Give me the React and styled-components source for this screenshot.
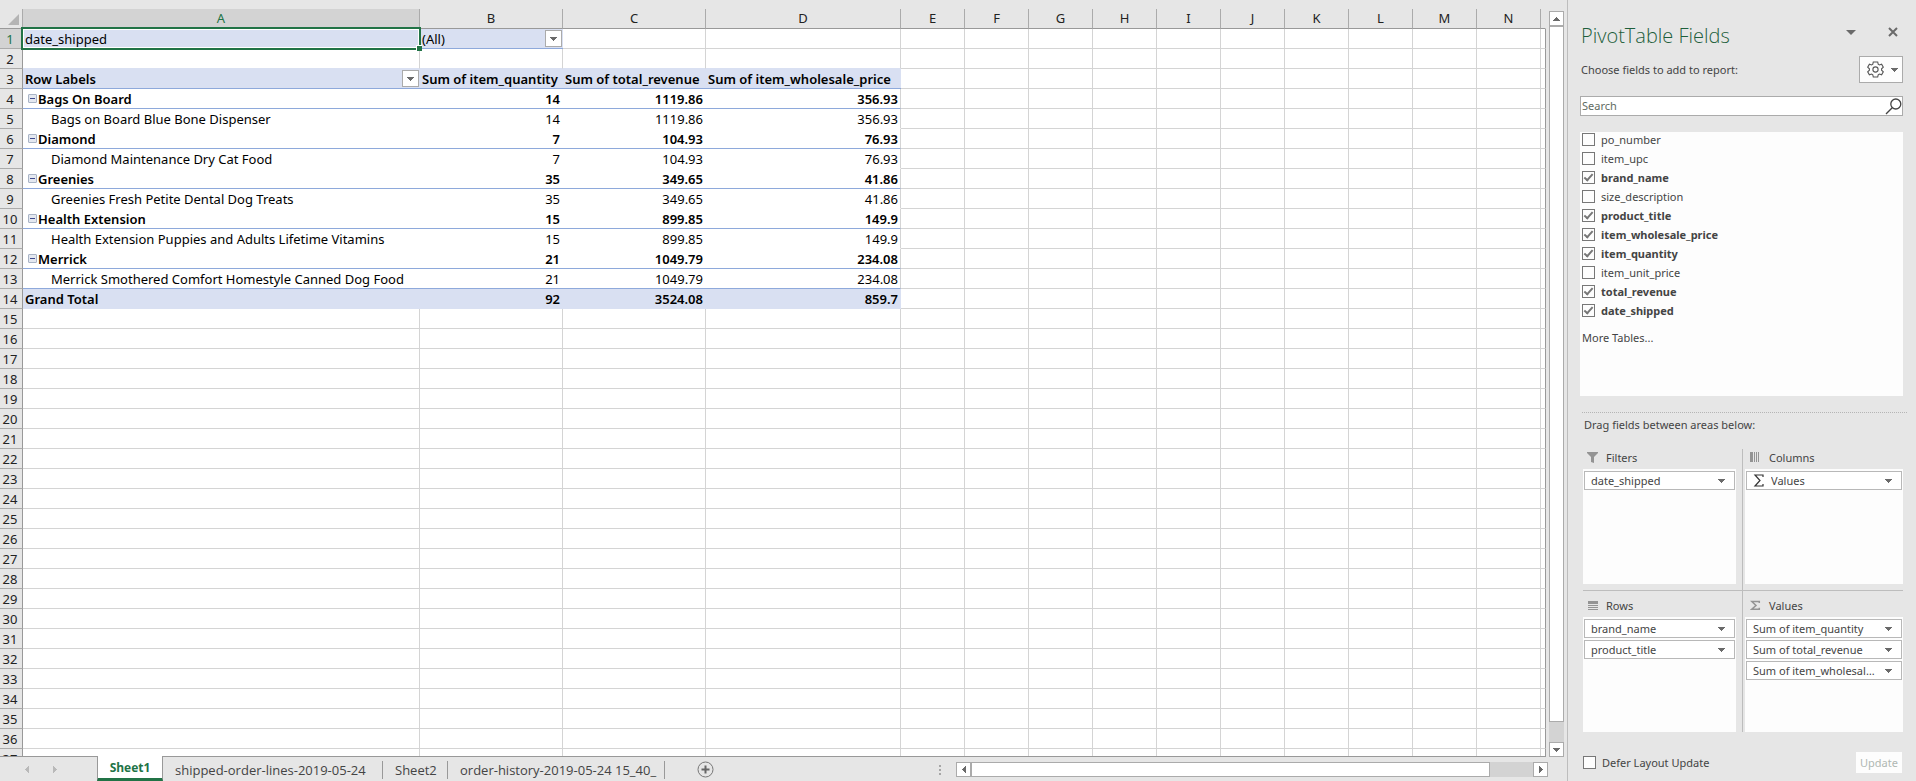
import React from "react";
import styled, { createGlobalStyle, css } from "styled-components";

const color = {
  chrome: "#e6e6e6",
  chromeSelected: "#d3d3d3",
  line: "#ababab",
  edge: "#999999",
  grid: "#d4d4d4",
  pivotFill: "#d9e0f2",
  pivotLine: "#8ea9db",
  green: "#217346",
  text: "#444444",
  glyph: "#6a6a6a",
  field: "#fdfdfd",
};

const GlobalStyle = createGlobalStyle`
  *, *::before, *::after { box-sizing: border-box; }
  body {
    margin: 0;
    background: ${color.chrome};
    font-family: "Noto Sans", "Open Sans", sans-serif;
    font-size: 13px;
    color: #000;
  }
  button, input { font: inherit; color: inherit; margin: 0; padding: 0; border-radius: 0; }
`;

const Window = styled.div`
  display: flex;
  height: 100vh;
  min-height: 640px;
  overflow: hidden;
  background: ${color.chrome};
`;

const Workbook = styled.main`
  flex: 1;
  min-width: 0;
  display: flex;
  flex-direction: column;
`;

const SheetArea = styled.div`
  flex: 1;
  min-height: 0;
  display: flex;
  gap: 3px;
  padding-right: 3px;
`;

const SheetView = styled.div`
  flex: 1;
  min-width: 0;
  padding-top: 9px;
  overflow: hidden;
  border-bottom: 1px solid ${color.edge};
`;

const Grid = styled.table`
  width: 100%;
  table-layout: fixed;
  border-collapse: separate;
  border-spacing: 0;
`;

const Col = styled.col`
  width: ${(p) => (p.$width ? `${p.$width}px` : "auto")};
`;

const ColumnHead = styled.th`
  height: 20px;
  padding: 0;
  line-height: 19px;
  font-weight: 400;
  color: ${(p) => (p.$selected ? color.green : "#222")};
  background: ${(p) => (p.$selected ? color.chromeSelected : color.chrome)};
  border-right: 1px solid ${(p) => (p.$last ? "transparent" : color.line)};
  border-bottom: 1px solid ${color.edge};
`;

const Corner = styled(ColumnHead)`
  vertical-align: bottom;
  svg { display: block; margin: 0 0 3px 8px; }
`;

const RowHead = styled.th`
  height: 20px;
  padding: 2px 2px 0 0;
  line-height: 17px;
  font-weight: 400;
  text-align: center;
  color: ${(p) => (p.$selected ? color.green : "#222")};
  background: ${(p) => (p.$selected ? color.chromeSelected : color.chrome)};
  border-right: 1px solid ${color.edge};
  border-bottom: 1px solid ${color.line};
`;

const Cell = styled.td`
  position: relative;
  height: 20px;
  padding: 0 ${(p) => (p.$open ? 1 : 0)}px 0 0;
  background: ${(p) => (p.$fill ? color.pivotFill : "#fff")};
  border-right: ${(p) => (p.$open ? "0" : `1px solid ${color.grid}`)};
  border-bottom: 1px solid ${(p) => p.$bottom || color.grid};
`;

const CellContent = styled.div`
  display: flex;
  align-items: center;
  justify-content: ${(p) => (p.$numeric ? "flex-end" : "flex-start")};
  height: 19px;
  padding-left: ${(p) => (p.$indent ? 28 : 2)}px;
  padding-right: ${(p) => (p.$menu ? 0 : 2)}px;
  font-weight: ${(p) => (p.$bold ? 600 : 400)};
  white-space: nowrap;
`;

const CellText = styled.span`
  padding-top: 2px;
  line-height: 17px;
`;

const FilterButton = styled.button`
  display: grid;
  place-items: center;
  width: 17px;
  height: 17px;
  margin-left: auto;
  background: #fff;
  border: 1px solid ${color.line};
`;

const CollapseButton = styled.button`
  display: grid;
  place-items: center;
  width: 9px;
  height: 9px;
  margin: 0 1px 0 3px;
  background: #e4e8f0;
  border: 1px solid #a9b4c6;
  border-radius: 1px;
  &::after { content: ""; width: 5px; height: 1px; background: #3f4a8c; }
`;

const Selection = styled.div`
  position: absolute;
  z-index: 1;
  inset: -2px;
  border: 2px solid ${color.green};
  box-shadow: inset 0 0 0 1px #fff;
  pointer-events: none;
  &::after {
    content: "";
    position: absolute;
    right: -3px;
    bottom: -3px;
    width: 6px;
    height: 6px;
    background: ${color.green};
    border-top: 1px solid #fff;
    border-left: 1px solid #fff;
  }
`;

const scrollPart = css`
  background: #fff;
  border: 1px solid ${color.line};
`;

const VerticalScroll = styled.div`
  display: flex;
  flex-direction: column;
  width: 15px;
  margin-top: 11px;
  background: ${color.chromeSelected};
`;

const HorizontalScroll = styled.div`
  display: flex;
  width: 592px;
  height: 15px;
  margin-right: 19px;
  background: ${color.chromeSelected};
`;

const ScrollButton = styled.button`
  ${scrollPart}
  display: grid;
  place-items: center;
  flex: 0 0 15px;
  height: 15px;
`;

const Thumb = styled.div`
  ${scrollPart}
  flex: ${(p) => p.$share};
`;

const Track = styled.div`
  flex: ${(p) => p.$share};
`;

const TabBar = styled.div`
  display: flex;
  align-items: center;
  height: 24px;
  padding-top: 1px;
  color: ${color.text};
`;

const TabArrows = styled.div`
  display: flex;
  gap: 20px;
  width: 97px;
  padding-left: 23px;
`;

const ArrowButton = styled.button`
  display: grid;
  place-items: center;
  width: 8px;
  height: 12px;
  background: none;
  border: 0;
`;

const Tabs = styled.div`
  display: flex;
  align-items: center;
  font-family: "Open Sans", "Noto Sans", sans-serif;
`;

const Tab = styled.button`
  width: ${(p) => p.$width}px;
  height: 18px;
  padding: 0 0 0 12px;
  line-height: 18px;
  text-align: left;
  white-space: nowrap;
  background: none;
  border: 0;
  border-right: 1px solid ${color.edge};
  ${(p) =>
    p.$active &&
    css`
      height: 25px;
      margin-top: -2px;
      padding: 0;
      line-height: 23px;
      text-align: center;
      font-size: 12px;
      font-weight: 700;
      color: ${color.green};
      background: #fff;
      border-left: 1px solid ${color.edge};
      border-bottom: 3px solid ${color.green};
    `}
`;

const AddSheet = styled.button`
  display: grid;
  place-items: center;
  margin-left: 32px;
  background: none;
  border: 0;
`;

const Grip = styled.svg`
  margin: 0 15px 0 auto;
`;

const Pane = styled.aside`
  display: flex;
  flex-direction: column;
  flex: 0 0 349px;
  padding: 21px 13px 8px 12px;
  border-left: 1px solid #bdbdbd;
  font-size: 11px;
  color: ${color.text};
`;

const PaneHeader = styled.header`
  display: flex;
  align-items: center;
  height: 30px;
  padding-right: 3px;
`;

const PaneTitle = styled.h1`
  flex: 1;
  margin: 0 0 0 1px;
  font-family: "Open Sans", "Noto Sans", sans-serif;
  font-size: 20px;
  font-weight: 300;
  line-height: 30px;
  color: #1e5f3c;
`;

const PaneButton = styled.button`
  display: grid;
  place-items: center;
  width: 14px;
  height: 14px;
  margin: 0 0 8px 28px;
  background: none;
  border: 0;
`;

const ChooseRow = styled.div`
  display: flex;
  align-items: center;
  justify-content: space-between;
  height: 27px;
  margin: 5px 0 13px;
  padding-left: 1px;
`;

const ToolsButton = styled.button`
  display: flex;
  align-items: center;
  justify-content: center;
  gap: 7px;
  width: 44px;
  height: 27px;
  padding-left: 2px;
  background: ${color.field};
  border: 1px solid ${color.line};
`;

const SearchBox = styled.label`
  display: flex;
  align-items: center;
  height: 20px;
  background: #fff;
  border: 1px solid ${color.line};
`;

const SearchInput = styled.input`
  flex: 1;
  min-width: 0;
  height: 18px;
  padding: 0 1px 2px;
  background: none;
  border: 0;
  outline: 0;
  &::placeholder { color: #5f6b62; opacity: 1; }
`;

const FieldList = styled.div`
  flex: 1 1 264px;
  min-height: 0;
  margin-top: 16px;
  padding: 0 2px;
  overflow: hidden;
  background: ${color.field};
`;

const CheckLabel = styled.label`
  display: flex;
  align-items: center;
  gap: 6px;
  height: 19px;
  padding-bottom: 4px;
  font-weight: ${(p) => (p.$bold ? 700 : 400)};
`;

const CheckBox = styled.input`
  appearance: none;
  display: grid;
  place-items: center;
  width: 13px;
  height: 13px;
  background: ${color.field};
  border: 1px solid #777;
  &:checked::after {
    content: "";
    width: 5px;
    height: 9px;
    margin-top: -2px;
    border: solid #777;
    border-width: 0 2px 2px 0;
    transform: rotate(42deg);
  }
`;

const MoreTables = styled.a`
  display: block;
  width: max-content;
  margin-top: 7px;
  line-height: 18px;
  color: inherit;
  text-decoration: none;
`;

const DragHint = styled.p`
  margin: 16px -4px 12px 2px;
  padding-left: 2px;
  border-top: 1px dotted #b5b5b5;
  line-height: 24px;
`;

const Areas = styled.div`
  flex: 1 1 283px;
  min-height: 0;
  display: grid;
  grid-template: 142fr 141fr / 1fr 1fr;
  margin-left: 3px;
`;

const Area = styled.section`
  display: flex;
  flex-direction: column;
  min-width: 0;
  ${(p) => (p.$top ? `padding-bottom: 6px; border-bottom: 1px solid #bdbdbd;` : `padding-top: 6px;`)}
  ${(p) => (p.$left ? `padding-right: 6px; border-right: 1px solid #bdbdbd;` : `padding-left: 2px;`)}
`;

const AreaTitle = styled.h2`
  display: flex;
  align-items: center;
  gap: 8px;
  height: 16px;
  margin: 0 0 4px;
  padding-left: ${(p) => (p.$left ? 4 : 5)}px;
  font-size: 11px;
  font-weight: 400;
`;

const DropZone = styled.div`
  flex: 1;
  display: flex;
  flex-direction: column;
  gap: 2px;
  padding: 2px 1px;
  background: ${color.field};
`;

const FieldButton = styled.button`
  display: flex;
  align-items: center;
  gap: 7px;
  height: 19px;
  padding: 0 9px 0 6px;
  line-height: 17px;
  background: #fff;
  border: 1px solid #b8b8b8;
  text-align: left;
`;

const FieldName = styled.span`
  flex: 1;
  min-width: 0;
  overflow: hidden;
  text-overflow: ellipsis;
  white-space: nowrap;
`;

const PaneFooter = styled.footer`
  display: flex;
  align-items: center;
  justify-content: space-between;
  height: 21px;
  margin: 20px 1px 0 3px;
`;

const DeferLabel = styled(CheckLabel)`
  padding: 0;
`;

const UpdateButton = styled.button`
  width: 46px;
  height: 21px;
  background: ${color.field};
  border: 0;
  color: #b0b8b3;
`;

const arrowPaths = {
  down: "M0 0H7V1H6V2H5V3H4V4H3V3H2V2H1V1H0Z",
  up: "M3 0H4V1H5V2H6V3H7V4H0V3H1V2H2V1H3Z",
  left: "M4 0V7H3V6H2V5H1V4H0V3H1V2H2V1H3V0Z",
  right: "M0 0V7H1V6H2V5H3V4H4V3H3V2H2V1H1V0Z",
};

function Arrow({ dir = "down", fill = color.glyph }) {
  const upright = dir === "left" || dir === "right";
  const w = upright ? 4 : 7;
  const h = upright ? 7 : 4;
  return (
    <svg width={w} height={h} viewBox={`0 0 ${w} ${h}`} aria-hidden="true">
      <path d={arrowPaths[dir]} fill={fill} />
    </svg>
  );
}

function GearIcon() {
  return (
    <svg width="17" height="17" viewBox="0 0 17 17" fill="none" stroke="#555" strokeWidth="1.1" aria-hidden="true">
      <path d="M6.3 1h4.4l.5 2.2 1.2.7 2.2-.7 1.7 3-1.7 1.6v1.4l1.7 1.6-1.7 3-2.2-.7-1.2.7-.5 2.2H6.3l-.5-2.2-1.2-.7-2.2.7-1.7-3 1.7-1.6V7.8L.7 6.2l1.700-3 2.200.7 1.200-.7z" />
      <circle cx="8.500" cy="8.500" r="2.600" />
    </svg>
  );
}

function SearchIcon() {
  return (
    <svg width="17" height="17" viewBox="0 0 17 17" fill="none" stroke="#444" strokeWidth="1.300" aria-hidden="true">
      <circle cx="10.800" cy="6" r="5" />
      <path d="M7.200 9.700L1 16" />
    </svg>
  );
}

const areaIcons = {
  Filters: (
    <svg width="11" height="11" viewBox="0 0 11 11" aria-hidden="true">
      <path d="M0 0H11V1L7 5V11L4 10V5L0 1Z" fill="#949494" />
    </svg>
  ),
  Columns: (
    <svg width="11" height="11" viewBox="0 0 11 11" aria-hidden="true">
      <path d="M0 0H3V10H0ZM4 0H5V10H4ZM6 0H7V10H6ZM8 0H9V10H8Z" fill="#949494" />
    </svg>
  ),
  Rows: (
    <svg width="11" height="11" viewBox="0 0 11 11" aria-hidden="true">
      <path d="M1 1H11V4H1ZM1 5H11V6H1ZM1 7H11V8H1ZM1 9H11V10H1Z" fill="#949494" />
    </svg>
  ),
  Values: (
    <svg width="11" height="11" viewBox="0 0 11 11" fill="none" stroke="#949494" strokeWidth="1.500" aria-hidden="true">
      <path d="M9.300 3V1.500H1.800L6 5.500 1.800 9.200H9.300V7.700" />
    </svg>
  ),
};

function SigmaIcon() {
  return (
    <svg width="11" height="13" viewBox="0 0 11 13" fill="none" stroke="#333" strokeWidth="1.200" aria-hidden="true">
      <path d="M10 3V1H2L7 6.500 2 12H10V10" />
    </svg>
  );
}

const columns = [
  ["A", 397],
  ["B", 143],
  ["C", 143],
  ["D", 195],
  ..."EFGHIJKLMN".split("").map((letter) => [letter, 64]),
  ["", null],
];

const rowCount = 37;

const pivotRows = {
  4: { brand: true, values: ["Bags On Board", "14", "1119.86", "356.93"] },
  5: { values: ["Bags on Board Blue Bone Dispenser", "14", "1119.86", "356.93"] },
  6: { brand: true, values: ["Diamond", "7", "104.93", "76.93"] },
  7: { values: ["Diamond Maintenance Dry Cat Food", "7", "104.93", "76.93"] },
  8: { brand: true, values: ["Greenies", "35", "349.65", "41.86"] },
  9: { values: ["Greenies Fresh Petite Dental Dog Treats", "35", "349.65", "41.86"] },
  10: { brand: true, values: ["Health Extension", "15", "899.85", "149.9"] },
  11: { values: ["Health Extension Puppies and Adults Lifetime Vitamins", "15", "899.85", "149.9"] },
  12: { brand: true, values: ["Merrick", "21", "1049.79", "234.08"] },
  13: { values: ["Merrick Smothered Comfort Homestyle Canned Dog Food", "21", "1049.79", "234.08"] },
};

const pivotHeadings = ["Row Labels", "Sum of item_quantity", "Sum of total_revenue", "Sum of item_wholesale_price"];
const grandTotal = ["Grand Total", "92", "3524.08", "859.7"];

function SheetCell({ row, col }) {
  if (row === 1 && col === 0) {
    return (
      <Cell $fill $bottom={color.pivotLine}>
        <CellContent><CellText>date_shipped</CellText></CellContent>
        <Selection />
      </Cell>
    );
  }
  if (row === 1 && col === 1) {
    return (
      <Cell $fill $open $bottom={color.pivotLine}>
        <CellContent $menu>
          <CellText>(All)</CellText>
          <FilterButton aria-label="Filter date_shipped"><Arrow /></FilterButton>
        </CellContent>
      </Cell>
    );
  }
  if (col > 3 || row > 14) return <Cell />;
  if (row === 2) return <Cell $bottom={color.pivotFill} />;
  if (row === 3) {
    return (
      <Cell $fill $open $bottom={color.pivotLine}>
        <CellContent $bold $menu={col === 0}>
          <CellText>{pivotHeadings[col]}</CellText>
          {col === 0 && <FilterButton aria-label="Filter row labels"><Arrow /></FilterButton>}
        </CellContent>
      </Cell>
    );
  }
  if (row === 14) {
    return (
      <Cell $fill $open $bottom={color.pivotFill}>
        <CellContent $bold $numeric={col > 0}><CellText>{grandTotal[col]}</CellText></CellContent>
      </Cell>
    );
  }
  const data = pivotRows[row];
  if (!data) return <Cell />;
  return (
    <Cell $open={col < 3} $bottom={data.brand || row === 13 ? color.pivotLine : "#fff"}>
      <CellContent $bold={data.brand} $numeric={col > 0} $indent={!data.brand && col === 0}>
        {data.brand && col === 0 && <CollapseButton aria-label={`Collapse ${data.values[0]}`} />}
        <CellText>{data.values[col]}</CellText>
      </CellContent>
    </Cell>
  );
}

const SheetEdge = styled(Cell)`
  border-right-color: ${color.edge};
`;

function Sheet() {
  return (
    <Grid>
      <colgroup>
        <Col $width={23} />
        {columns.map(([letter, width]) => <Col key={letter} $width={width} />)}
      </colgroup>
      <thead>
        <tr>
          <Corner>
            <svg width="11" height="11" viewBox="0 0 11 11" aria-hidden="true"><path d="M11 0V11H0Z" fill="#b4b4b4" /></svg>
          </Corner>
          {columns.map(([letter]) => (
            <ColumnHead key={letter} scope="col" $selected={letter === "A"} $last={!letter}>{letter}</ColumnHead>
          ))}
        </tr>
      </thead>
      <tbody>
        {Array.from({ length: rowCount }, (_, i) => i + 1).map((row) => (
          <tr key={row}>
            <RowHead scope="row" $selected={row === 1}>{row}</RowHead>
            {columns.map(([letter], col) =>
              letter ? <SheetCell key={letter} row={row} col={col} /> : <SheetEdge key="edge" />
            )}
          </tr>
        ))}
      </tbody>
    </Grid>
  );
}

const fields = [
  ["po_number", false],
  ["item_upc", false],
  ["brand_name", true],
  ["size_description", false],
  ["product_title", true],
  ["item_wholesale_price", true],
  ["item_quantity", true],
  ["item_unit_price", false],
  ["total_revenue", true],
  ["date_shipped", true],
];

const areas = [
  { title: "Filters", top: true, left: true, items: ["date_shipped"] },
  { title: "Columns", top: true, items: ["Values"], sigma: true },
  { title: "Rows", left: true, items: ["brand_name", "product_title"] },
  { title: "Values", items: ["Sum of item_quantity", "Sum of total_revenue", "Sum of item_wholesale_price"] },
];

const sheets = [
  ["Sheet1", 66],
  ["shipped-order-lines-2019-05-24", 220],
  ["Sheet2", 65],
  ["order-history-2019-05-24 15_40_", 217],
];

function FieldsPane() {
  return (
    <Pane>
      <PaneHeader>
        <PaneTitle>PivotTable Fields</PaneTitle>
        <PaneButton aria-label="Pane options">
          <svg width="10" height="5" viewBox="0 0 10 5" aria-hidden="true"><path d="M0 0H10L5 5Z" fill={color.glyph} /></svg>
        </PaneButton>
        <PaneButton aria-label="Close pane">
          <svg width="10" height="10" viewBox="0 0 10 10" aria-hidden="true"><path d="M1 1L9 9M9 1L1 9" stroke={color.glyph} strokeWidth="2" /></svg>
        </PaneButton>
      </PaneHeader>
      <ChooseRow>
        Choose fields to add to report:
        <ToolsButton aria-label="Tools"><GearIcon /><Arrow /></ToolsButton>
      </ChooseRow>
      <SearchBox>
        <SearchInput type="text" placeholder="Search" aria-label="Search fields" />
        <SearchIcon />
      </SearchBox>
      <FieldList>
        {fields.map(([name, checked]) => (
          <CheckLabel key={name} $bold={checked}>
            <CheckBox type="checkbox" defaultChecked={checked} />
            {name}
          </CheckLabel>
        ))}
        <MoreTables href="#more-tables">More Tables...</MoreTables>
      </FieldList>
      <DragHint>Drag fields between areas below:</DragHint>
      <Areas>
        {areas.map(({ title, top, left, items, sigma }) => (
          <Area key={title} $top={top} $left={left}>
            <AreaTitle $left={left}>{areaIcons[title]}{title}</AreaTitle>
            <DropZone>
              {items.map((item) => (
                <FieldButton key={item}>
                  {sigma && <SigmaIcon />}
                  <FieldName>{item}</FieldName>
                  <Arrow />
                </FieldButton>
              ))}
            </DropZone>
          </Area>
        ))}
      </Areas>
      <PaneFooter>
        <DeferLabel><CheckBox type="checkbox" />Defer Layout Update</DeferLabel>
        <UpdateButton disabled>Update</UpdateButton>
      </PaneFooter>
    </Pane>
  );
}

export default function App() {
  return (
    <Window>
      <GlobalStyle />
      <Workbook>
        <SheetArea>
          <SheetView><Sheet /></SheetView>
          <VerticalScroll>
            <ScrollButton aria-label="Scroll up"><Arrow dir="up" /></ScrollButton>
            <Thumb $share={696} />
            <Track $share={20} />
            <ScrollButton aria-label="Scroll down"><Arrow /></ScrollButton>
          </VerticalScroll>
        </SheetArea>
        <TabBar>
          <TabArrows>
            <ArrowButton aria-label="Previous sheet"><Arrow dir="left" fill="#b9b9b9" /></ArrowButton>
            <ArrowButton aria-label="Next sheet"><Arrow dir="right" fill="#b9b9b9" /></ArrowButton>
          </TabArrows>
          <Tabs role="tablist">
            {sheets.map(([name, width], i) => (
              <Tab key={name} role="tab" aria-selected={i === 0} $active={i === 0} $width={width}>{name}</Tab>
            ))}
          </Tabs>
          <AddSheet aria-label="New sheet">
            <svg width="17" height="17" viewBox="0 0 17 17" fill="none" stroke="#777" aria-hidden="true">
              <circle cx="8.500" cy="8.500" r="7.500" />
              <path d="M4.500 8.500H12.500M8.500 4.500V12.500" stroke="#666" strokeWidth="2" />
            </svg>
          </AddSheet>
          <Grip width="2" height="10" viewBox="0 0 2 10" aria-hidden="true">
            <path d="M0 0H2V2H0ZM0 4H2V6H0ZM0 8H2V10H0Z" fill="#a6a6a6" />
          </Grip>
          <HorizontalScroll>
            <ScrollButton aria-label="Scroll left"><Arrow dir="left" /></ScrollButton>
            <Thumb $share={519} />
            <Track $share={43} />
            <ScrollButton aria-label="Scroll right"><Arrow dir="right" /></ScrollButton>
          </HorizontalScroll>
        </TabBar>
      </Workbook>
      <FieldsPane />
    </Window>
  );
}
